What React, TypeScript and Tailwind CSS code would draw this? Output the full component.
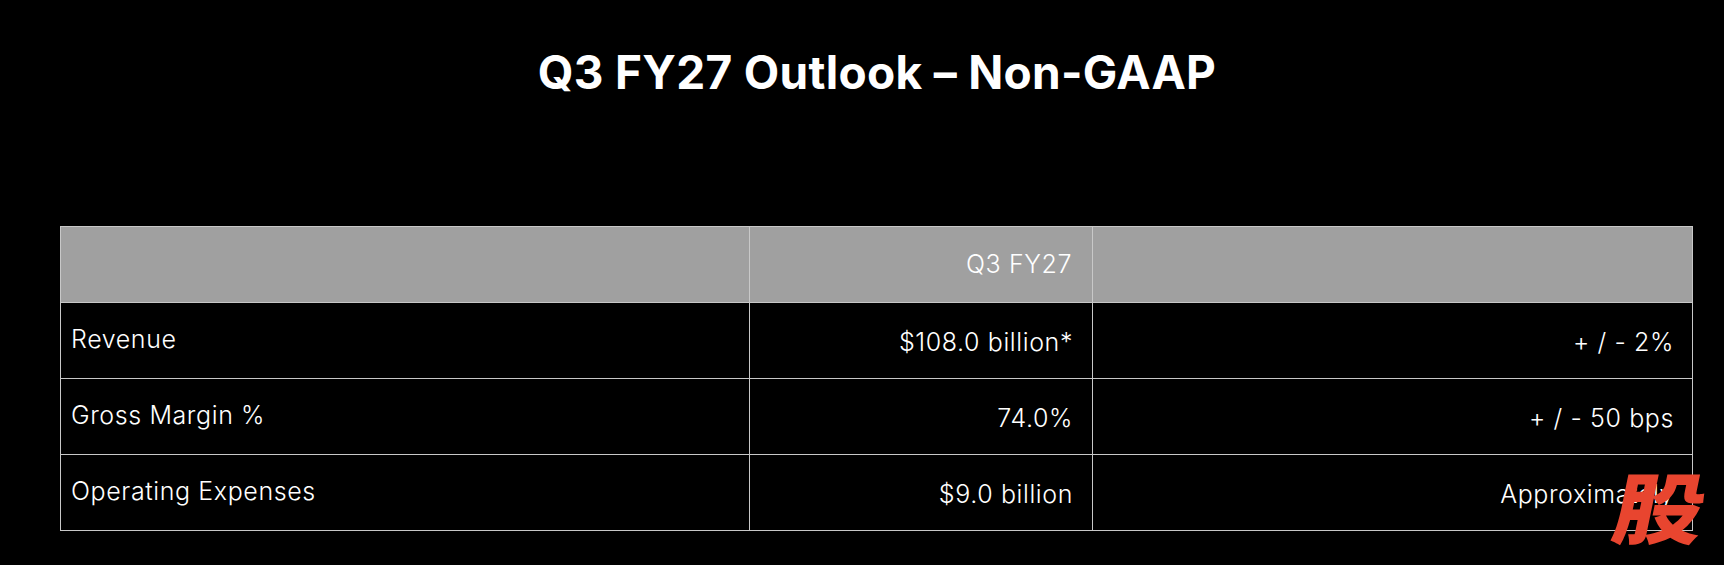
const rows = [
  { label: "Revenue", value: "$108.0 billion*", range: "+ / - 2%" },
  { label: "Gross Margin %", value: "74.0%", range: "+ / - 50 bps" },
  { label: "Operating Expenses", value: "$9.0 billion", range: "Approximately" },
];

export default function App() {
  return (
    <div
      className="relative h-[565px] w-full overflow-hidden bg-black text-white"
      style={{ fontFamily: "Inter, 'Noto Sans', sans-serif" }}
    >
      <h1 className="pl-[30px] pt-[44px] text-center text-[46px] font-bold leading-[56px] tracking-[0.3px]">
        Q3 FY27 Outlook – Non-GAAP
      </h1>

      <div className="mt-[126px] pl-[60px]">
        <table className="w-[1633px] border-collapse text-[25px] font-light tracking-[0.6px]">
          <thead>
            <tr className="bg-[#a0a0a0]">
              <th className="h-[76px] w-[689px] border border-[#c8c8c8]" />
              <th className="h-[76px] w-[343px] border border-[#c8c8c8] pr-[20px] text-right font-light">
                Q3 FY27
              </th>
              <th className="h-[76px] border border-[#c8c8c8]" />
            </tr>
          </thead>
          <tbody>
            {rows.map((row) => (
              <tr key={row.label}>
                <td className="h-[76px] border border-[#c8c8c8] pl-[10px] pb-[2px] text-left">{row.label}</td>
                <td className="h-[76px] border border-[#c8c8c8] pr-[19px] pt-[4px] text-right">{row.value}</td>
                <td className="h-[76px] border border-[#c8c8c8] pr-[18px] pt-[4px] text-right">{row.range}</td>
              </tr>
            ))}
          </tbody>
        </table>
      </div>

      {/* watermark */}
      <div
        className="absolute left-[1618px] top-[462px] -skew-x-[10deg] scale-x-[1.05] scale-y-[0.9] text-[86px] font-black leading-none text-[#e8452f]"
        style={{ fontFamily: "'Noto Sans CJK SC', sans-serif" }}
      >
        股
      </div>
    </div>
  );
}
